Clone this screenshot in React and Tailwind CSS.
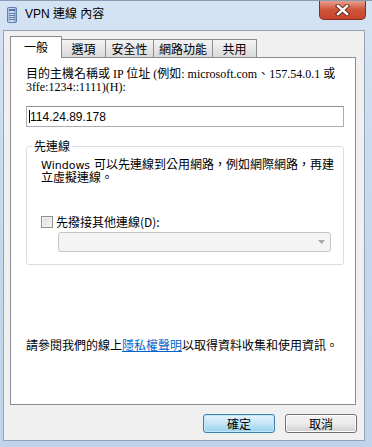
import React from 'react'

const tabs = [
  { name: '一般', w: 'w-[52px]', active: true },
  { name: '選項', w: 'w-[45px]' },
  { name: '安全性', w: 'w-[49px]' },
  { name: '網路功能', w: 'w-[60px]' },
  { name: '共用', w: 'w-[45px]' },
]

function TitleIcon() {
  return (
    <svg width="10" height="16" viewBox="0 0 10 16">
      <defs>
        <linearGradient id="ic" x1="0" x2="1" y1="0" y2="0">
          <stop offset="0" stopColor="#9fb6d6" />
          <stop offset="0.5" stopColor="#d9e5f3" />
          <stop offset="1" stopColor="#7f9cc4" />
        </linearGradient>
      </defs>
      <rect x="0.5" y="0.5" width="9" height="15" rx="1" fill="url(#ic)" stroke="#5d7fae" />
      <rect x="2" y="2" width="6" height="2" fill="#4f74a8" />
      <line x1="2" x2="8" y1="6.5" y2="6.5" stroke="#5d7fae" />
      <line x1="2" x2="8" y1="8.5" y2="8.5" stroke="#5d7fae" />
      <line x1="2" x2="8" y1="10.5" y2="10.5" stroke="#5d7fae" />
      <line x1="2" x2="8" y1="12.5" y2="12.5" stroke="#5d7fae" />
    </svg>
  )
}

function CloseGlyph() {
  return (
    <svg width="15" height="12" viewBox="0 0 15 12">
      <path d="M3 2 L12 10 M12 2 L3 10" stroke="#5a2018" strokeWidth="4.2" strokeLinecap="square" />
      <path d="M3 2 L12 10 M12 2 L3 10" stroke="#ffffff" strokeWidth="2.4" strokeLinecap="square" />
    </svg>
  )
}

export default function App() {
  return (
    <div className="w-[372px] h-[447px] flex flex-col bg-gradient-to-b from-[#d4e3f4] via-[#c5d8ee] to-[#bfd4eb] border-t border-[#8a9cb3] overflow-hidden font-['Noto_Sans_CJK_TC',sans-serif] text-[12px] text-black">
      {/* 標題列 */}
      <div className="h-[29px] flex items-start shrink-0">
        <div className="ml-[7px] mt-[6px]">
          <TitleIcon />
        </div>
        <div className="ml-[8px] mt-[5px] leading-[16px] text-[12px] font-['Liberation_Sans','Noto_Sans_CJK_TC',sans-serif]">
          VPN 連線 內容
        </div>
        <div className="flex-1" />
        <div className="mr-[6px] -mt-px w-[47px] h-[20px] rounded-b-[5px] border border-t-0 border-[#7e2d20] bg-gradient-to-b from-[#e9a897] via-[#d0543d] to-[#c8442b] shadow-[inset_0_1px_0_rgba(255,255,255,0.5)] flex items-center justify-center">
          <CloseGlyph />
        </div>
      </div>

      {/* 內容區 */}
      <div className="ml-[3px] mr-[7px] h-[411px] shrink-0 bg-[#f0f0f0] border border-[#95a2b2] flex flex-col">
        <div className="pt-[5px] pl-[6px] pr-[8px]">
          {/* 頁籤 */}
          <div className="flex items-end h-[21px]">
            {tabs.map((t) =>
              t.active ? (
                <div
                  key={t.name}
                  className={`${t.w} h-[22px] -mb-px relative z-10 bg-white border border-b-0 border-[#898c95] flex items-center justify-center leading-[14px] pb-[2px]`}
                >
                  {t.name}
                </div>
              ) : (
                <div
                  key={t.name}
                  className={`${t.w} h-[18px] -ml-px first:ml-0 bg-gradient-to-b from-[#f3f3f3] to-[#dadada] border border-b-0 border-[#898c95] flex items-center justify-center leading-[14px]`}
                >
                  {t.name}
                </div>
              )
            )}
          </div>

          {/* 頁籤內容 */}
          <div className="h-[348px] bg-white border border-[#898c95] pl-[15px] pr-[11px] pt-[10px] flex flex-col">
            <div className="leading-[13px] font-['Liberation_Serif','Noto_Sans_CJK_TC',serif] whitespace-nowrap">
              <div>目的主機名稱或 IP 位址 (例如: microsoft.com、157.54.0.1 或</div>
              <div>3ffe:1234::1111)(H):</div>
            </div>

            <div className="mt-[12px] h-[21px] border border-[#abadb3] border-t-[#8e9196] bg-white flex items-center pl-[2px] font-['Liberation_Sans',sans-serif]">
              <span className="w-px h-[13px] bg-black" />
              <span className="leading-[14px]">114.24.89.178</span>
            </div>

            {/* 先連線 群組 */}
            <div className="mt-[19px] h-[119px] border border-[#d5dfe5] rounded-[3px] relative pl-[14px] pt-[12px] flex flex-col">
              <div className="absolute -top-[8px] left-[5px] bg-white px-[2px] leading-[14px]">先連線</div>
              <div className="leading-[13px] font-['DejaVu_Sans','Noto_Sans_CJK_TC',sans-serif] whitespace-nowrap">
                <div>
                  <span className="text-[11px]">Windows</span> 可以先連線到公用網路，例如網際網路，再建
                </div>
                <div>立虛擬連線。</div>
              </div>

              <div className="mt-[30px] flex items-center h-[14px]">
                <span className="w-[12px] h-[12px] border border-[#8f8f8f] bg-gradient-to-br from-[#dcdcdc] to-[#f6f6f6] shadow-[inset_0_0_0_1px_#f4f4f4]" />
                <span className="ml-[3px] leading-[14px]">先撥接其他連線(D):</span>
              </div>

              <div className="mt-[3px] ml-[17px] w-[273px] h-[20px] rounded-[3px] border border-[#c5c5c5] bg-[#f4f4f4] flex items-center justify-end pr-[5px]">
                <svg width="7" height="4" viewBox="0 0 7 4">
                  <path d="M0 0 L7 0 L3.5 4 Z" fill="#a8a8a8" />
                </svg>
              </div>
            </div>

            <div className="mt-[74px] leading-[12px] whitespace-nowrap">
              請參閱我們的線上<span className="text-[#0066cc] underline">隱私權聲明</span>以取得資料收集和使用資訊。
            </div>
          </div>
        </div>

        {/* 按鈕 */}
        <div className="mt-[9px] flex justify-end gap-[10px] pr-[7px]">
          <button className="w-[72px] h-[19px] rounded-[3px] border border-[#3c7fb1] bg-gradient-to-b from-[#e5f4fc] via-[#c4e5f6] to-[#98d1ef] shadow-[inset_0_0_0_1px_#bfe8fb] flex items-center justify-center leading-[14px] text-[12px]">
            確定
          </button>
          <button className="w-[72px] h-[19px] rounded-[3px] border border-[#707070] bg-gradient-to-b from-[#f2f2f2] via-[#ebebeb] to-[#cfcfcf] shadow-[inset_0_0_0_1px_#fcfcfc] flex items-center justify-center leading-[14px] text-[12px]">
            取消
          </button>
        </div>
      </div>
    </div>
  )
}
